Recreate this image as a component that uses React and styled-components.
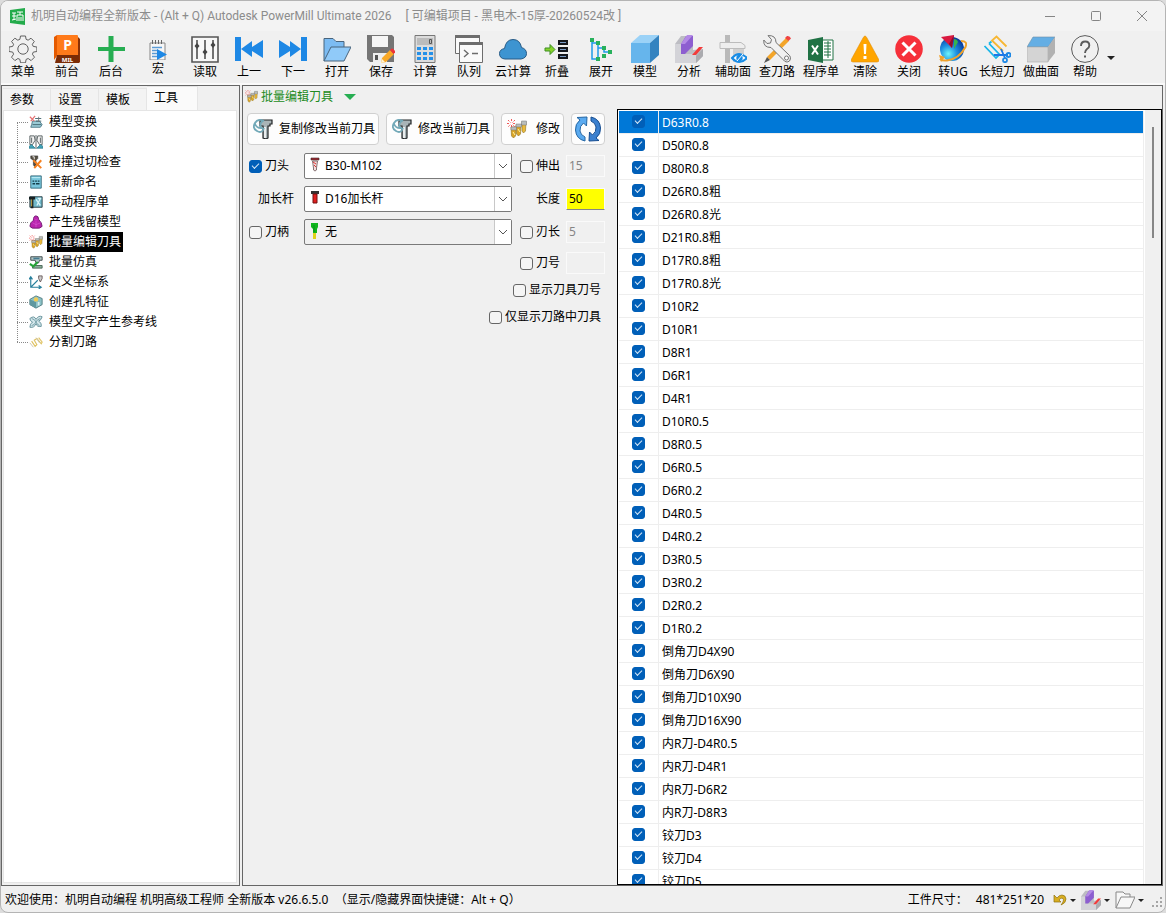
import { useState } from 'react';
import styled, { createGlobalStyle } from 'styled-components';

const GlobalStyle = createGlobalStyle`
    *, *::before, *::after {
        box-sizing: border-box;
    }

    body {
        margin: 0;
        background: #dcdcdc;
    }

    body, button, input, select {
        color: #000;
        font-family: 'Noto Sans', 'Noto Sans CJK SC', sans-serif;
        font-size: 12px;
        line-height: 16px;
    }
`;

/* ---------- Icons: toolbar ---------- */

const GearIcon = () => (
    <svg viewBox="0 0 28 28" fill="none" stroke="#5f5f5f">
        <path d="M11.5 1h5l.6 3.3 2 .9 2.9-2 3.3 3.3-2 2.8.9 2.1 3.7.6v4.5l-3.6.6-.9 2.1 2.1 3-3.4 3.4-2.9-2.1-2.1.9-.6 3.4h-5l-.6-3.4-2-.9-3 2.1-3.4-3.4 2.1-3-.9-2.1-3.7-.6V12l3.7-.6.9-2.1-2-2.8 3.3-3.3 2.9 2 2.1-.9z" />
        <circle cx="14" cy="14" r="5.2" />
    </svg>
);

const PowerMillIcon = () => (
    <svg viewBox="0 0 28 28">
        <path d="M24 1l3 3v24l-3-3z" fill="#8a3206" />
        <path d="M4 0h20q1 0 1 1v20H4z" fill="#ff7a1a" />
        <path d="M1 2l3-2v21l-3 4z" fill="#e55a00" />
        <path d="M4 20h22v8H2z" fill="#7b2c06" />
        <text x="14.5" y="15" fill="#fff" fontSize="14" fontWeight="700" textAnchor="middle">P</text>
        <text x="14.5" y="26.5" fill="#fff" fontSize="6" fontWeight="700" textAnchor="middle">MIL</text>
    </svg>
);

const PlusIcon = () => (
    <svg viewBox="0 0 28 28">
        <path d="M11.5 1h5v11H28v4H16.500v11h-5V16H1v-4h10.500z" fill="#27ae52" />
    </svg>
);

const MacroIcon = () => (
    <svg viewBox="0 0 20 20">
        <path d="M2 3h15v17H2z" fill="#f7f7f7" stroke="#868686" />
        <path d="M4.500 0v4M7.500 0v4M10.500 0v4M13.500 0v4" stroke="#666" />
        <path d="M4 7.500h10M4 10.500h6M4 13.500h6M4 16.500h8" stroke="#5b9bd5" strokeWidth="1.400" />
        <path d="M9 9l10 5.500L9 20z" fill="#1e88e5" />
    </svg>
);

const SlidersIcon = () => (
    <svg viewBox="0 0 28 28">
        <path d="M1 2h26v25H1z" fill="#f7f7f7" stroke="#555" strokeWidth="1.600" />
        <path d="M6 5v19M14 5v19M22 5v19" stroke="#444" strokeWidth="1.500" />
        <path d="M6 8l2.500 3L6 14l-2.500-3zM14 14l2.500 3-2.500 3-2.500-3zM22 7l2.500 3-2.500 3-2.500-3z" fill="#444" />
    </svg>
);

const PrevIcon = () => (
    <svg viewBox="0 0 28 28" fill="#1e88e5">
        <path d="M0 2h6v24H0zM6 14L17 6v6l11-7v18l-11-7v6z" />
    </svg>
);

const NextIcon = () => (
    <svg viewBox="0 0 28 28" fill="#1e88e5">
        <path d="M28 2h-6v24h6zM22 14L11 6v6L0 5v18l11-7v6z" />
    </svg>
);

const OpenIcon = () => (
    <svg viewBox="0 0 28 28" stroke="#49647c" strokeLinejoin="round">
        <path d="M1 26V3.500h9l3 3h8V12" fill="#7cbcf3" />
        <path d="M1 26L8 12h20l-7 14z" fill="#90caf9" />
    </svg>
);

const SaveIcon = () => (
    <svg viewBox="0 0 28 28">
        <path d="M0 0h25l2 2v25H3l-3-3z" fill="#757575" />
        <path d="M5 1h16v11H5z" fill="#f5f5f5" />
        <path d="M6 18h14v9H6z" fill="#eee" />
        <path d="M8 20h3v5H8z" fill="#555" />
        <path d="M14 28l1-5 8-8 4 4-8 8z" fill="#f9a825" />
        <path d="M14 28l1-4 3 3z" fill="#fff3d0" />
        <path d="M23 15l1.500-1.500q2-.5 3.500 2.500v1.500L26.500 19z" fill="#ee3338" />
    </svg>
);

const CalculatorIcon = () => (
    <svg viewBox="0 0 28 28">
        <path d="M4 .5h20v27H4z" fill="#dcdcdc" stroke="#777" />
        <path d="M6 3h16v7H6z" fill="#bcbcbc" />
        <path d="M18.500 4.500h2v4h-2z" fill="none" stroke="#555" />
        {[12, 17, 22].map((y) =>
            [6, 12, 18].map((x) => (
                <rect key={`${x}-${y}`} x={x} y={y} width="4" height="3" fill="#2490e9" />
            ))
        )}
    </svg>
);

const QueueIcon = () => (
    <svg viewBox="0 0 28 28" fill="#fafafa" stroke="#6d6d6d">
        <path d="M.5 .5h24v18H.5z" />
        <path d="M.5 .5h24v2H.5z" fill="#6d6d6d" />
        <path d="M4.500 7.500h23v20h-23z" />
        <path d="M4.500 7.500h23v2h-23z" fill="#6d6d6d" />
        <path d="M9 15l4 3.500L9 22M17 18.500h6" fill="none" strokeWidth="1.400" />
    </svg>
);

const CloudIcon = () => (
    <svg viewBox="0 0 28 28">
        <path d="M6 24q-5.500-.5-5.500-5.500 0-4 5-5Q7 4.500 14 4.500q7 0 8.500 8 5 1.500 5 6T22 24z" fill="#3d94d1" stroke="#285b86" />
    </svg>
);

const CollapseIcon = () => (
    <svg viewBox="0 0 28 28">
        <path d="M2 13h5V9.500l5 5-5 5V16H2z" fill="#86d32c" stroke="#3f8f25" />
        <path d="M16 6h8v3h-8zM16 13h8v3h-8zM16 20h8v3h-8z" fill="#7a9cc6" stroke="#15181d" strokeWidth="2" />
    </svg>
);

const ExpandIcon = () => (
    <svg viewBox="0 0 28 28">
        <path d="M5 5v19h6M5 8h6v16M11 13h6M17 13v4h6" fill="none" stroke="#1e9be9" strokeWidth="1.500" />
        <path d="M3 3h4v4H3zM9 6h4v4H9zM15 11h4v4h-4zM21 15h4v4h-4zM15 19h4v4h-4zM9 22h4v4H9z" fill="#28b15c" />
    </svg>
);

const CubeIcon = () => (
    <svg viewBox="0 0 28 28">
        <path d="M0 8L9 0h19l-9 8z" fill="#9bd2f7" />
        <path d="M19 8l9-8v20l-9 8z" fill="#3483c0" />
        <path d="M0 8h19v20H0z" fill="#66b5ec" />
    </svg>
);

const AnalyseIcon = () => (
    <svg viewBox="0 0 28 28">
        <path d="M0 9l6-8h12v14l10-1v7l-7 7H0z" fill="#bdbdc3" />
        <path d="M0 9h6v10h15v9H0z" fill="#d3d3d8" />
        <path d="M6 9l5-8h7v10l-8 8H6z" fill="#8d5ed0" />
        <path d="M6 9l6-9h6l-8 9z" fill="#b48ae6" />
        <path d="M17 20l7-8h4l-7 8z" fill="#f23b3b" />
        <path d="M21 21l7-7v7l-7 7z" fill="#ababaf" />
    </svg>
);

const HelperFaceIcon = () => (
    <svg viewBox="0 0 28 28">
        <path d="M6 0h5v28H6z" fill="#b9b9b9" />
        <path d="M1 7.500h21l4 3v3H1z" fill="#eee" stroke="#bcbcbc" />
        <path d="M14 14h11v13H14z" fill="#d0d0d0" />
        <path d="M13 23q7-8 15 0-8 8-15 0z" fill="#fff" stroke="#188ce5" strokeWidth="2" />
        <circle cx="20.500" cy="23" r="3.200" fill="#188ce5" />
        <path d="M18 26l6-7" stroke="#fff" />
    </svg>
);

const ToolsIcon = () => (
    <svg viewBox="0 0 28 28">
        <path d="M4 22L23 3l3 3L7 25z" fill="#f3a52a" />
        <path d="M1 28l3-6 3 3z" fill="#555" />
        <path d="M22 3l2-2q3-.5 4 2.500L25.500 6z" fill="#f04343" />
        <path d="M5 .6l3.500 4L7.500 8 4 8.500.8 5Q0 12.500 8 12.500L20 24.500q3 4 6.500 1.500 2.500-4-1.500-7L13 7.500Q13 0 5 .6z" fill="#f1f1f1" stroke="#727272" />
        <circle cx="23.500" cy="23" r="2" fill="#fff" stroke="#777" />
    </svg>
);

const ExcelIcon = () => (
    <svg viewBox="0 0 28 28">
        <path d="M15 5h11v20H15z" fill="#fff" stroke="#207245" />
        <path d="M17 8h7M17 11h7M17 14h7M17 17h7M17 20h7M21 6v17" stroke="#207245" />
        <path d="M1 5l15-3v26L1 25z" fill="#207245" />
        <path d="M5 10.500l6 9M11 10.500l-6 9" stroke="#fff" strokeWidth="2" />
    </svg>
);

const WarningIcon = () => (
    <svg viewBox="0 0 28 28">
        <path d="M14 1q1 0 2 2l12 22q0 2-2 2H2q-2 0-2-2L12 3q1-2 2-2z" fill="#ffa500" stroke="#e08e0b" strokeWidth=".6" />
        <path d="M12.500 9h3l-.5 10h-2zM12.500 21h3v3h-3z" fill="#fff" />
    </svg>
);

const CloseCircleIcon = () => (
    <svg viewBox="0 0 28 28">
        <circle cx="14" cy="14" r="13.800" fill="#f6303a" />
        <path d="M7.500 7.500l13 13M20.500 7.500l-13 13" stroke="#fff" strokeWidth="3" />
    </svg>
);

const GlobeIcon = () => (
    <svg viewBox="0 0 28 28">
        <defs>
            <radialGradient id="globe" cx=".35" cy=".7" r=".7">
                <stop offset="0" stopColor="#6ff5fa" />
                <stop offset=".5" stopColor="#1d8fe0" />
                <stop offset="1" stopColor="#0b3fa0" />
            </radialGradient>
        </defs>
        <circle cx="13" cy="14" r="12" fill="url(#globe)" />
        <path d="M15 4q3 0 4 3l-4 7z" fill="#35b34f" />
        <path d="M22 6q7 0 4.500 6Q20 24 8 25.500q-5 .5-7-1.500" fill="none" stroke="#f0a22c" strokeWidth="2" />
        <path d="M0 20l6 2-4 5z" fill="#f0a22c" />
        <path d="M2 2l13-2-2 13z" fill="#d9183f" />
        <path d="M15 0l-2 13-3-4z" fill="#8c1030" />
    </svg>
);

const CutPathIcon = () => (
    <svg viewBox="0 0 28 28" fill="none" strokeWidth="1.800">
        <path d="M1.500 11L13 23l3.500-3.500L6 8.500M6 8.500l2.500-2" stroke="#18b5e8" />
        <path d="M20 16L9 5.500 13.500 1.500 23.500 11.500" stroke="#f7b733" />
        <path d="M11 20l14 0M18 14l4 9" stroke="#1e78e6" />
        <circle cx="25.500" cy="20" r="2" stroke="#1e88e5" />
        <circle cx="22" cy="25.200" r="2" stroke="#1e88e5" />
    </svg>
);

const SurfaceIcon = () => (
    <svg viewBox="0 0 28 28">
        <path d="M0 12L6 2h22l-7 10z" fill="#64aee4" stroke="#6b8fa8" strokeWidth=".6" />
        <path d="M0 12h21v15H0z" fill="#d4d4d4" stroke="#aaa" strokeWidth=".6" />
        <path d="M21 12l7-10v16l-7 9z" fill="#b2b2b2" />
    </svg>
);

const HelpIcon = () => (
    <svg viewBox="0 0 28 28" fill="none" stroke="#5b5b5b">
        <circle cx="14" cy="14" r="13.400" />
        <path d="M10 11q0-4.500 4.300-4.500 4 0 4 4 0 2-2.300 3.500-2 1.500-2 4" strokeWidth="1.900" />
        <path d="M13 20.500h2v2h-2z" fill="#5b5b5b" stroke="none" />
    </svg>
);

/* ---------- Icons: window, tree, form ---------- */

const AppIcon = () => (
    <svg viewBox="0 0 17 17">
        <path d="M1 2l15-2v17L1 15z" fill="#24ab4b" />
        <path d="M3 5h4M5 5v7M3 8h4M3 12l4-1M8 4h6M8 7h6M8 7v6M10 9v4M12 9v4M14 7v6M11 4v3" fill="none" stroke="#fff" />
    </svg>
);

const BatchToolIcon = () => (
    <svg viewBox="0 0 20 20">
        <path d="M4 8h5l-.5 9-2 2-2-2zM9 6h5l-.5 9-2 2-2-2z" fill="#dba526" stroke="#8a7027" strokeWidth=".6" />
        <path d="M15 3h4l-.5 9-2 2-1.500-2z" fill="#e9b93c" stroke="#8a7027" strokeWidth=".6" />
        <path d="M4 8h5.500v3H4zM9 5h5.500v3H9zM14.500 2h5v4h-5z" fill="#b9bdbc" stroke="#777" strokeWidth=".5" />
        <path d="M6 13l2 3M11 10l2 3" stroke="#fff4aa" />
        <path d="M4.500 0v9M0 4.500h9M1 1l7 7M8 1L1 8" stroke="#ef2d2d" strokeWidth=".8" strokeDasharray="2 1" />
        <circle cx="4.500" cy="4.500" r="1.500" fill="#fff" />
    </svg>
);

const CopyToolIcon = () => (
    <svg viewBox="0 0 20 20">
        <path d="M7 1h12v4h-2v2h-2v12l-2 1-3-1V7H7z" fill="#a9b4b7" stroke="#202426" strokeWidth="1.200" />
        <path d="M12 8v11" stroke="#fff" strokeWidth="1.500" />
        <path d="M11 2Q5-1 2 4t2 8q5 3 7-3M2 5q2 5 8 4M10 2q-4 2-2 7" fill="none" stroke="#72a9b8" strokeWidth="1.800" />
    </svg>
);

const RefreshIcon = () => (
    <svg viewBox="0 0 28 28" strokeLinejoin="round">
        <path d="M11 26Q2 24 1.500 15 1 9 6 5L3 2.500 13 2l-.5 9-3-3Q5.500 11 6 16q.5 4 5 6z" fill="#5aaaf0" stroke="#2466a3" />
        <path d="M17 2q9 2 9.500 11 .5 6-4.500 10l3 2.500-10 .5.500-9 3 3q4-3 3.500-8-.5-4-5-6z" fill="#3b80cf" stroke="#164d90" />
    </svg>
);

const DrillIcon = () => (
    <svg viewBox="0 0 12 16">
        <path d="M2 1h8v2H2z" fill="#a32d35" stroke="#3b2527" strokeWidth=".6" />
        <path d="M3.500 4h5L7.500 11v2L6 14l-1.500-1v-2z" fill="#f4dcdc" stroke="#6a5456" strokeWidth=".8" />
        <path d="M4 5l3 2M5 8l2 2" stroke="#d33" />
    </svg>
);

const ExtensionIcon = () => (
    <svg viewBox="0 0 12 16">
        <path d="M2 1h8v3H2z" fill="#333" />
        <path d="M4 4h4v9H4z" fill="#e01e1e" stroke="#701010" />
    </svg>
);

const ShankIcon = () => (
    <svg viewBox="0 0 12 16">
        <path d="M2 0h7v4L8 6v4H4V6L2 4z" fill="#0fb51c" />
        <path d="M4 10h3v6H4z" fill="#ded21a" />
        <path d="M5 2v7" stroke="#07901a" />
    </svg>
);

const ChevronIcon = () => (
    <svg viewBox="0 0 10 10" fill="none" stroke="#555">
        <path d="M1 3l4 4 4-4" />
    </svg>
);

const UndoIcon = () => (
    <svg viewBox="0 0 14 14">
        <path d="M1 2v7h7L6 7q2-3 4-1.500 1.500 2-2 6.500 5-2 5-6-.5-4-4-4-3 0-5 3z" fill="#d9ae20" stroke="#8e7111" strokeWidth=".7" />
    </svg>
);

const FolderIcon = () => (
    <svg viewBox="0 0 20 20" fill="#f7f7f7" stroke="#888">
        <path d="M1 18V2h7l2 2h5v3" />
        <path d="M1 18L6 7h14l-5 11z" />
    </svg>
);

const GripIcon = () => (
    <svg viewBox="0 0 12 12" fill="#a5a5a5">
        <path d="M9 0h2v2H9zM9 4h2v2H9zM5 4h2v2H5zM9 8h2v2H9zM5 8h2v2H5zM1 8h2v2H1z" />
    </svg>
);

const ModelTransformIcon = () => (
    <svg viewBox="0 0 16 16" fill="none">
        <path d="M4 7h8l3 4-2 3H2l1-3z" fill="#9acbd6" stroke="#477582" />
        <path d="M4 11h10M7 4h7M8 7h6" stroke="#3a606a" />
        <path d="M1 2l5 5M7 1L2 7" stroke="#e57272" strokeWidth="1.400" />
        <path d="M11 2v6" stroke="#777" />
    </svg>
);

const PathTransformIcon = () => (
    <svg viewBox="0 0 16 16" fill="none" stroke="#4d5657">
        <path d="M1 1h5l1 5-3 5H1zM15 1h-5L9 6l3 5h3z" fill="#f4f4f4" />
        <path d="M8 0v16M3 3v6M13 3v6" />
        <path d="M0 13l3-2 4 4H0zM16 13l-3-2-4 4h7z" fill="#43a4ba" stroke="#348396" />
    </svg>
);

const CollisionIcon = () => (
    <svg viewBox="0 0 16 16">
        <path d="M2 1h8v3L8 6v6l-2 1-1-2V6L2 4z" fill="#565044" stroke="#262522" strokeWidth=".6" />
        <path d="M4 2h2v3" stroke="#fff" fill="none" />
        <path d="M5 6l9 9M14 6l-8 9" stroke="#f58120" strokeWidth="2.200" />
    </svg>
);

const RenameIcon = () => (
    <svg viewBox="0 0 16 16">
        <path d="M2 1h12v14H2z" fill="#78c6dc" stroke="#326879" />
        <path d="M3 3h10" stroke="#c7f2fb" />
        <path d="M4 7h2M7 7h2M10 7h2M4 10h3M8 10h4" stroke="#143e4a" strokeWidth="1.500" />
    </svg>
);

const ManualSheetIcon = () => (
    <svg viewBox="0 0 16 16">
        <path d="M1 2h14v12H1z" fill="#70b8c9" stroke="#20363b" />
        <path d="M0 2h7v3H5v10H2V5H0z" fill="#172022" />
        <path d="M3 5v8" stroke="#e0bb51" />
        <path d="M8 5l5 7M13 4l-4 8M10 4h4" stroke="#d8f4f8" strokeWidth="1.500" />
    </svg>
);

const ResidualIcon = () => (
    <svg viewBox="0 0 16 16">
        <path d="M8 1q3 0 3 4l3 4 1 4q-3 3-7 2-5 1-7-2l1-4 3-3q0-5 3-5z" fill="#b925ae" stroke="#6b146c" />
        <path d="M4 9l4 2 5-2M6 4l2 2 2-2M8 7v7" fill="none" stroke="#e160d6" strokeWidth=".6" />
    </svg>
);

const SimulationIcon = () => (
    <svg viewBox="0 0 16 16">
        <path d="M2 2h13v4h-3l-1 3H8L7 6H2z" fill="#b5c8c8" stroke="#343f40" />
        <path d="M5 3h7v2H5z" fill="#447b91" />
        <path d="M4 12h11v3H4z" fill="#8cae99" stroke="#426050" />
        <path d="M1 10l4 3 5-5" fill="none" stroke="#25a337" strokeWidth="2.500" />
    </svg>
);

const AxisIcon = () => (
    <svg viewBox="0 0 16 16" fill="none" stroke="#287f9c">
        <path d="M2 3v11h11M2 14l8-8M0 5l2-3 2 3M11 12l3 2-3 2" strokeWidth="1.300" />
        <path d="M11 1h4v3l-2 4-2-4z" fill="#ccc" stroke="#655" />
    </svg>
);

const HoleFeatureIcon = () => (
    <svg viewBox="0 0 16 16">
        <path d="M1 5l7-4 7 3v7l-7 4-7-4z" fill="#8dc2c7" stroke="#4b777b" />
        <path d="M1 5l7 3v7l-7-4z" fill="#5f98a0" />
        <circle cx="8" cy="5" r="2.500" fill="#f0cb55" />
        <path d="M11 8v4" stroke="#d9f0f0" strokeWidth="2" />
    </svg>
);

const TextCurveIcon = () => (
    <svg viewBox="0 0 16 16">
        <path d="M1 4q5-4 7 1 3-5 7-3-1 4-4 5 4 2 3 6-5 1-6-3-2 5-7 4 0-4 3-6-3-1-3-4z" fill="#d3e6ea" stroke="#5d8b95" />
        <path d="M3 4q4 1 5 4 1 3 4 4M13 4q-4 1-5 4-2 4-5 4" fill="none" stroke="#6d99a2" />
    </svg>
);

const SplitIcon = () => (
    <svg viewBox="0 0 16 16" fill="none" stroke="#dfc263">
        <path d="M3 7l4 6 2-2-3-5 3-2 5 6 1-2-4-5" strokeWidth="1.300" />
        <path d="M1 9l4 5M8 3l4 6" stroke="#c9c2aa" />
    </svg>
);

/* ---------- Data ---------- */

const tools = [
    { label: '菜单', icon: <GearIcon /> },
    { label: '前台', icon: <PowerMillIcon /> },
    { label: '后台', icon: <PlusIcon /> },
    { label: '宏', icon: <MacroIcon />, small: true },
    { label: '读取', icon: <SlidersIcon /> },
    { label: '上一', icon: <PrevIcon /> },
    { label: '下一', icon: <NextIcon /> },
    { label: '打开', icon: <OpenIcon /> },
    { label: '保存', icon: <SaveIcon /> },
    { label: '计算', icon: <CalculatorIcon /> },
    { label: '队列', icon: <QueueIcon /> },
    { label: '云计算', icon: <CloudIcon /> },
    { label: '折叠', icon: <CollapseIcon /> },
    { label: '展开', icon: <ExpandIcon /> },
    { label: '模型', icon: <CubeIcon /> },
    { label: '分析', icon: <AnalyseIcon /> },
    { label: '辅助面', icon: <HelperFaceIcon /> },
    { label: '查刀路', icon: <ToolsIcon /> },
    { label: '程序单', icon: <ExcelIcon /> },
    { label: '清除', icon: <WarningIcon /> },
    { label: '关闭', icon: <CloseCircleIcon /> },
    { label: '转UG', icon: <GlobeIcon /> },
    { label: '长短刀', icon: <CutPathIcon /> },
    { label: '做曲面', icon: <SurfaceIcon /> },
    { label: '帮助', icon: <HelpIcon /> },
];

const tabs = ['参数', '设置', '模板', '工具'];

const treeItems = [
    { label: '模型变换', icon: <ModelTransformIcon /> },
    { label: '刀路变换', icon: <PathTransformIcon /> },
    { label: '碰撞过切检查', icon: <CollisionIcon /> },
    { label: '重新命名', icon: <RenameIcon /> },
    { label: '手动程序单', icon: <ManualSheetIcon /> },
    { label: '产生残留模型', icon: <ResidualIcon /> },
    { label: '批量编辑刀具', icon: <BatchToolIcon /> },
    { label: '批量仿真', icon: <SimulationIcon /> },
    { label: '定义坐标系', icon: <AxisIcon /> },
    { label: '创建孔特征', icon: <HoleFeatureIcon /> },
    { label: '模型文字产生参考线', icon: <TextCurveIcon /> },
    { label: '分割刀路', icon: <SplitIcon /> },
];

const cutters = [
    'D63R0.8', 'D50R0.8', 'D80R0.8', 'D26R0.8粗', 'D26R0.8光', 'D21R0.8粗',
    'D17R0.8粗', 'D17R0.8光', 'D10R2', 'D10R1', 'D8R1', 'D6R1', 'D4R1',
    'D10R0.5', 'D8R0.5', 'D6R0.5', 'D6R0.2', 'D4R0.5', 'D4R0.2', 'D3R0.5',
    'D3R0.2', 'D2R0.2', 'D1R0.2', '倒角刀D4X90', '倒角刀D6X90',
    '倒角刀D10X90', '倒角刀D16X90', '内R刀-D4R0.5', '内R刀-D4R1',
    '内R刀-D6R2', '内R刀-D8R3', '铰刀D3', '铰刀D4', '铰刀D5',
];

/* ---------- Components ---------- */

const Combo = ({ id, icon, value, muted, label }) => (
    <ComboBox $muted={muted}>
        <ComboIcon>{icon}</ComboIcon>
        <ComboSelect id={id} aria-label={label} defaultValue={value}>
            <option>{value}</option>
        </ComboSelect>
        <ComboArrow>
            <ChevronIcon />
        </ComboArrow>
    </ComboBox>
);

const TitleBar = () => (
    <Title>
        <TitleIcon>
            <AppIcon />
        </TitleIcon>
        <TitleText>机明自动编程全新版本 - (Alt + Q) Autodesk PowerMill Ultimate 2026</TitleText>
        <TitleText>[ 可编辑项目 - 黑电木-15厚-20260524改 ]</TitleText>
        <WindowButtons>
            <WindowButton aria-label="最小化">
                <svg viewBox="0 0 12 12"><path d="M1 6.500h10" /></svg>
            </WindowButton>
            <WindowButton aria-label="最大化">
                <svg viewBox="0 0 12 12"><rect x="1.500" y="1.500" width="9" height="9" rx="1" /></svg>
            </WindowButton>
            <WindowButton aria-label="关闭窗口">
                <svg viewBox="0 0 12 12"><path d="M1 1l10 10M11 1L1 11" /></svg>
            </WindowButton>
        </WindowButtons>
    </Title>
);

const SidePanel = () => {
    const [tab, setTab] = useState('工具');
    const [current, setCurrent] = useState('批量编辑刀具');

    return (
        <Side>
            <Tabs role="tablist">
                {tabs.map((name) => (
                    <Tab
                        key={name}
                        role="tab"
                        aria-selected={tab === name}
                        $active={tab === name}
                        onClick={() => setTab(name)}>
                        {name}
                    </Tab>
                ))}
            </Tabs>
            <Tree>
                {treeItems.map(({ label, icon }) => (
                    <TreeItem key={label}>
                        <TreeIcon>{icon}</TreeIcon>
                        <TreeLabel $active={current === label} onClick={() => setCurrent(label)}>
                            {label}
                        </TreeLabel>
                    </TreeItem>
                ))}
            </Tree>
        </Side>
    );
};

const EditForm = () => (
    <Form onSubmit={(e) => e.preventDefault()}>
        <Actions>
            <ActionButton>
                <CopyToolIcon />
                复制修改当前刀具
            </ActionButton>
            <ActionButton>
                <CopyToolIcon />
                修改当前刀具
            </ActionButton>
            <BatchButton>
                <BatchToolIcon />
                修改
            </BatchButton>
            <RefreshButton aria-label="刷新">
                <RefreshIcon />
            </RefreshButton>
        </Actions>
        <Fields>
            <Check>
                <Checkbox type="checkbox" defaultChecked />
                刀头
            </Check>
            <Combo label="刀头" icon={<DrillIcon />} value="B30-M102" />
            <FieldCheck>
                <Checkbox type="checkbox" />
                伸出
            </FieldCheck>
            <TextBox aria-label="伸出" defaultValue="15" disabled />

            <FieldLabel htmlFor="extension" $inset>加长杆</FieldLabel>
            <Combo id="extension" icon={<ExtensionIcon />} value="D16加长杆" />
            <FieldLabel htmlFor="length">长度</FieldLabel>
            <TextBox id="length" defaultValue="50" $highlight />

            <Check>
                <Checkbox type="checkbox" />
                刀柄
            </Check>
            <Combo label="刀柄" icon={<ShankIcon />} value="无" muted />
            <FieldCheck>
                <Checkbox type="checkbox" />
                刃长
            </FieldCheck>
            <TextBox aria-label="刃长" defaultValue="5" disabled />
        </Fields>
        <Extras>
            <NumberRow>
                <Check>
                    <Checkbox type="checkbox" />
                    刀号
                </Check>
                <TextBox aria-label="刀号" disabled />
            </NumberRow>
            <Option>
                <Checkbox type="checkbox" />
                显示刀具刀号
            </Option>
            <Option>
                <Checkbox type="checkbox" />
                仅显示刀路中刀具
            </Option>
        </Extras>
    </Form>
);

const CutterList = () => {
    const [selected, setSelected] = useState(0);

    return (
        <List>
            <ListView>
                <Table>
                    <tbody>
                        {cutters.map((name, i) => (
                            <Row key={name} $selected={selected === i} onClick={() => setSelected(i)}>
                                <CheckCell>
                                    <Checkbox type="checkbox" aria-label={name} defaultChecked />
                                </CheckCell>
                                <NameCell>{name}</NameCell>
                            </Row>
                        ))}
                    </tbody>
                </Table>
            </ListView>
            <ScrollTrack>
                <ScrollThumb />
            </ScrollTrack>
        </List>
    );
};

const App = () => (
    <Window>
        <GlobalStyle />
        <TitleBar />
        <Toolbar>
            {tools.map(({ label, icon, small }) => (
                <ToolButton key={label} $small={small}>
                    {icon}
                    {label}
                </ToolButton>
            ))}
            <MoreButton aria-label="更多">
                <Caret />
            </MoreButton>
        </Toolbar>
        <Workspace>
            <SidePanel />
            <Main>
                <MainHeader>
                    <BatchToolIcon />
                    批量编辑刀具
                    <GreenCaret />
                </MainHeader>
                <MainBody>
                    <EditForm />
                    <CutterList />
                </MainBody>
            </Main>
        </Workspace>
        <StatusBar>
            <StatusText>
                欢迎使用：机明自动编程 机明高级工程师 全新版本 v26.6.5.0&nbsp; （显示/隐藏界面快捷键：Alt + Q）
            </StatusText>
            <span>工件尺寸：</span>
            <StatusSize>481*251*20</StatusSize>
            <StatusButton aria-label="撤销" $size={14}>
                <UndoIcon />
                <SmallCaret />
            </StatusButton>
            <StatusButton aria-label="分析视图" $size={20}>
                <AnalyseIcon />
                <SmallCaret />
            </StatusButton>
            <StatusButton aria-label="打开文件夹" $size={20}>
                <FolderIcon />
                <SmallCaret />
            </StatusButton>
            <Grip>
                <GripIcon />
            </Grip>
        </StatusBar>
    </Window>
);

/* ---------- Window ---------- */

var Window = styled.div`
    display: flex;
    flex-direction: column;
    height: 100vh;
    overflow: hidden;
    background: #f0f0f0;
    border: 1px solid #b4b4b4;
    border-radius: 8px;
`;

var Title = styled.header`
    display: flex;
    flex: none;
    align-items: center;
    height: 30px;
    padding-left: 8px;
    background: #f3f3f3;
    color: #8c8c8c;
    font-family: Roboto, 'Noto Sans CJK SC', sans-serif;
`;

var TitleIcon = styled.span`
    display: flex;
    width: 17px;
    margin-right: 5px;
`;

var TitleText = styled.span`
    margin-right: 14px;
    white-space: nowrap;
`;

var WindowButtons = styled.div`
    display: flex;
    margin-left: auto;
`;

var WindowButton = styled.button`
    display: flex;
    align-items: center;
    justify-content: center;
    width: 46px;
    height: 30px;
    padding: 0;
    border: 0;
    background: none;

    svg {
        width: 12px;
        fill: none;
        stroke: #858585;
    }
`;

var Toolbar = styled.nav`
    display: flex;
    flex: none;
    height: 54px;
    border-bottom: 2px solid #fafafa;
`;

var ToolButton = styled.button`
    display: flex;
    flex: none;
    flex-direction: column;
    align-items: center;
    gap: 1px;
    width: ${({ $small }) => ($small ? '50px' : '44px')};
    padding: ${({ $small }) => ($small ? '9px 0 0' : '4px 0 0')};
    border: 0;
    background: none;
    white-space: nowrap;

    svg {
        flex: none;
        width: ${({ $small }) => ($small ? '20px' : '28px')};
    }
`;

var MoreButton = styled.button`
    display: flex;
    align-items: center;
    padding: 2px 0 0;
    border: 0;
    background: none;
`;

var Caret = styled.span`
    border: 4px solid transparent;
    border-top-color: #222;
    border-bottom: 0;
`;

var SmallCaret = styled(Caret)`
    border-width: 3px;
    border-bottom: 0;
`;

var GreenCaret = styled(Caret)`
    margin-left: 8px;
    border-width: 6px;
    border-top-color: #27ae52;
    border-bottom: 0;
`;

var Workspace = styled.div`
    display: flex;
    flex: 1;
    gap: 2px;
    min-height: 0;
    padding-right: 2px;
`;

/* ---------- Side panel ---------- */

var Side = styled.aside`
    display: flex;
    flex: none;
    flex-direction: column;
    width: 239px;
    padding: 0 2px 2px 1px;
    border: 1px solid #666;
`;

var Tabs = styled.div`
    display: flex;
    align-items: flex-end;
    height: 24px;
`;

var Tab = styled.button`
    width: ${({ $active }) => ($active ? '51px' : '48px')};
    height: ${({ $active }) => ($active ? '24px' : '22px')};
    padding: ${({ $active }) => ($active ? '0 0 2px 7px' : '0 0 0 7px')};
    border: 1px solid #e5e5e5;
    border-width: 1px 1px 0 0;
    background: ${({ $active }) => ($active ? '#fafafa' : '#f3f3f3')};
    text-align: left;
`;

var Tree = styled.ul`
    flex: 1;
    margin: 0;
    padding: 1px 0 0 13px;
    border: 1px solid #e5e5e5;
    background: #fff;
    list-style: none;
`;

var TreeItem = styled.li`
    position: relative;
    display: flex;
    align-items: center;
    height: 20px;
    padding-left: 12px;

    &::before {
        content: '';
        position: absolute;
        top: 10px;
        left: 0;
        width: 11px;
        border-top: 1px dotted #888;
    }

    &:not(:last-child)::after {
        content: '';
        position: absolute;
        top: 10px;
        left: 0;
        height: 20px;
        border-left: 1px dotted #888;
    }
`;

var TreeIcon = styled.span`
    display: flex;
    width: 14px;
    margin-right: 4px;
`;

var TreeLabel = styled.button`
    height: 20px;
    padding: 0 2px;
    border: 0;
    background: ${({ $active }) => ($active ? '#000' : 'none')};
    color: ${({ $active }) => ($active ? '#fff' : '#000')};
`;

/* ---------- Main panel ---------- */

var Main = styled.main`
    display: flex;
    flex: 1;
    flex-direction: column;
    min-width: 0;
    border: 1px solid #666;
`;

var MainHeader = styled.div`
    display: flex;
    flex: none;
    align-items: center;
    gap: 3px;
    height: 23px;
    padding: 0 0 2px 2px;
    color: #228b22;

    svg {
        width: 13px;
    }
`;

var MainBody = styled.div`
    display: flex;
    flex: 1;
    min-height: 0;
`;

var Form = styled.form`
    flex: none;
    width: 374px;
    padding: 4px 12px 0 4px;
`;

var Actions = styled.div`
    display: flex;
    gap: 7px;
    margin-bottom: 8px;
`;

var ActionButton = styled.button`
    display: flex;
    align-items: center;
    gap: 6px;
    height: 32px;
    padding: 0 3px 0 5px;
    border: 1px solid #d0d0d0;
    border-radius: 4px;
    background: #fdfdfd;
    white-space: nowrap;

    svg {
        width: 20px;
    }
`;

var BatchButton = styled(ActionButton)`
    justify-content: space-between;
    width: 63px;
`;

var RefreshButton = styled(ActionButton)`
    justify-content: center;
    width: 34px;
    padding: 0;

    svg {
        width: 28px;
    }
`;

var Fields = styled.div`
    display: grid;
    grid-template-columns: 49px 1fr 42px 39px;
    grid-auto-rows: 26px;
    gap: 7px 6px;
    align-items: center;
    padding-left: 2px;
`;

var Check = styled.label`
    display: flex;
    align-items: center;
    gap: 3px;
    white-space: nowrap;
`;

var FieldCheck = styled(Check)`
    justify-content: flex-end;
`;

var Checkbox = styled.input`
    position: relative;
    flex: none;
    width: 13px;
    height: 13px;
    margin: 0;
    border: 1px solid #666;
    border-radius: 3px;
    background: #f5f5f5;
    appearance: none;

    &:checked {
        border-color: #005fb8;
        background: #005fb8;
    }

    &:checked::after {
        content: '';
        position: absolute;
        top: 2px;
        left: 2px;
        width: 7px;
        height: 4px;
        border: 1px solid #d6e8f7;
        border-width: 0 0 1px 1px;
        transform: rotate(-45deg);
    }
`;

var FieldLabel = styled.label`
    padding-right: ${({ $inset }) => ($inset ? '4px' : 0)};
    text-align: right;
    white-space: nowrap;
`;

var ComboBox = styled.div`
    position: relative;
    height: 26px;
    border: 1px solid #7a7a7a;
    border-radius: 2px;
    background: ${({ $muted }) => ($muted ? '#f0f0f0' : '#fff')};
`;

var ComboSelect = styled.select`
    width: 100%;
    height: 24px;
    padding: 0 18px 0 20px;
    border: 0;
    background: transparent;
    appearance: none;
`;

var ComboIcon = styled.span`
    position: absolute;
    top: 3px;
    left: 4px;
    display: flex;
    width: 12px;
    pointer-events: none;
`;

var ComboArrow = styled.span`
    position: absolute;
    top: 0;
    right: 0;
    display: flex;
    align-items: center;
    justify-content: center;
    width: 17px;
    height: 24px;
    border-left: 1px solid #c8c8c8;
    background: #fff;
    pointer-events: none;

    svg {
        width: 10px;
    }
`;

var TextBox = styled.input`
    width: 39px;
    height: 22px;
    padding: 0 2px 2px;
    border: 1px solid #fafafa;
    border-bottom-color: ${({ $highlight }) => ($highlight ? '#868686' : '#fafafa')};
    background: ${({ $highlight }) => ($highlight ? '#ff0' : '#f0f0f0')};

    &:disabled {
        color: #858585;
    }
`;

var Extras = styled.div`
    display: flex;
    flex-direction: column;
    align-items: flex-end;
    padding-top: 7px;
`;

var NumberRow = styled.div`
    display: flex;
    align-items: center;
    gap: 6px;
    margin-bottom: 8px;
`;

var Option = styled(Check)`
    margin: 0 4px 11px 0;
`;

/* ---------- Cutter list ---------- */

var List = styled.section`
    display: flex;
    flex: 1;
    min-width: 0;
    border: 1px solid #000;
    background: #fff;
`;

var ListView = styled.div`
    flex: 1;
    min-width: 0;
    overflow: hidden;
    padding: 1px 1px 0;
`;

var Table = styled.table`
    width: 100%;
    border-spacing: 0;
    table-layout: fixed;
`;

var Row = styled.tr`
    height: 23px;
    background: ${({ $selected }) => ($selected ? '#0078d7' : '#fff')};
    color: ${({ $selected }) => ($selected ? '#fff' : '#000')};
`;

var CheckCell = styled.td`
    width: 40px;
    height: 23px;
    padding: 0 0 1px 13px;
    border-right: 1px solid #eee;
    border-bottom: 1px solid #eee;
    line-height: 0;
`;

var NameCell = styled.td`
    padding: 2px 3px 0;
    border-right: 1px solid #eee;
    border-bottom: 1px solid #eee;
    white-space: nowrap;
`;

var ScrollTrack = styled.div`
    display: flex;
    justify-content: center;
    width: 16px;
    padding-top: 17px;
    background: #f0f0f0;
`;

var ScrollThumb = styled.div`
    width: 2px;
    height: 111px;
    background: #868686;
`;

/* ---------- Status bar ---------- */

var StatusBar = styled.footer`
    display: flex;
    flex: none;
    align-items: center;
    height: 26px;
    padding: 2px 0 0 4px;
    white-space: nowrap;
`;

var StatusText = styled.span`
    flex: 1;
`;

var StatusSize = styled.span`
    margin: 0 9px 0 8px;
`;

var StatusButton = styled.button`
    display: flex;
    align-items: center;
    gap: 3px;
    margin-right: 5px;
    padding: 0;
    border: 0;
    background: none;

    svg {
        width: ${({ $size }) => $size}px;
    }
`;

var Grip = styled.span`
    display: flex;
    align-self: flex-end;
    width: 12px;
    margin: 0 2px 3px;
`;

export default App;
